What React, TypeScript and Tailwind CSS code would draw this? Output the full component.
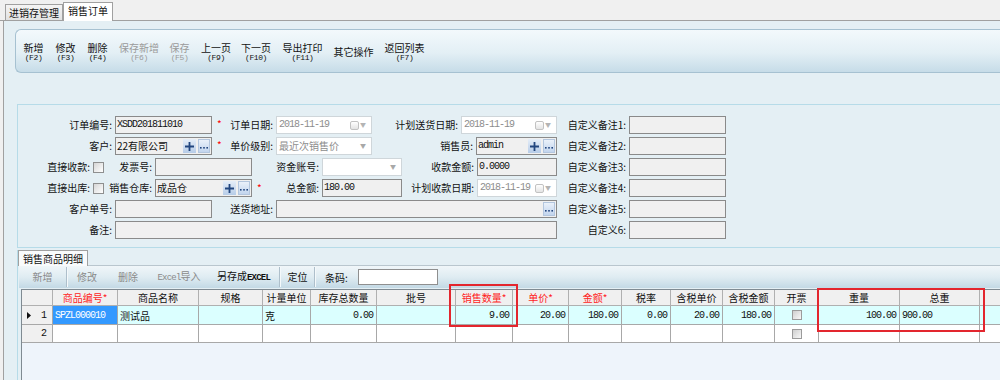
import type { ReactNode } from "react";

const mono = "font-['Liberation_Mono',monospace] tracking-[-1px] text-[10px]";

type Kids = { className?: string; children?: ReactNode };

function Label({ className = "", children }: Kids) {
  return (
    <div className={`shrink-0 whitespace-nowrap pr-[3px] text-right text-[10px] leading-[18px] text-[#111] ${className}`}>
      {children}
    </div>
  );
}

function Input({ className = "", children }: Kids) {
  return (
    <div className={`flex h-[18px] shrink-0 items-center overflow-hidden border border-[#8a8a8a] bg-[#f0f0f0] pl-px pr-px ${className}`}>
      {children}
    </div>
  );
}

function Star() {
  return <div className="w-[16px] shrink-0 pl-[5px] text-[10px] leading-[16px] text-[#f00]">*</div>;
}

function Check() {
  return <span className="block h-[11px] w-[11px] shrink-0 border border-[#8e8f8f] bg-[linear-gradient(135deg,#d6d6d6,#ffffff)]" />;
}

function PlusBtn() {
  return (
    <span className="flex h-[14px] w-[13px] shrink-0 items-center justify-center bg-[linear-gradient(to_bottom,#e6eef8,#b6cce8)]">
      <svg width="9" height="9" viewBox="0 0 9 9">
        <path d="M3.6 0h1.8v9H3.6zM0 3.6h9v1.8H0z" fill="#22467f" />
      </svg>
    </span>
  );
}

function DotsBtn() {
  return (
    <span className="ml-[2px] flex h-[14px] w-[12px] shrink-0 items-end justify-center border border-[#b3c6de] bg-[linear-gradient(to_bottom,#eaf1fa,#c2d5ee)] pb-[3px]">
      <svg width="8" height="2" viewBox="0 0 8 2">
        <rect x="0" y="0" width="1.6" height="1.6" fill="#22467f" />
        <rect x="3.2" y="0" width="1.6" height="1.6" fill="#22467f" />
        <rect x="6.4" y="0" width="1.6" height="1.6" fill="#22467f" />
      </svg>
    </span>
  );
}

function Value({ children, gray }: { children?: ReactNode; gray?: boolean }) {
  return <span className={`${mono} flex-1 whitespace-nowrap leading-none ${gray ? "text-[#8d8d8d]" : "text-[#111]"}`}>{children}</span>;
}

function DateBox({ className = "" }: { className?: string }) {
  return (
    <div className={`flex h-[18px] shrink-0 items-center border border-[#cfd6da] bg-white pl-[2px] pr-[5px] ${className}`}>
      <Value gray>2018-11-19</Value>
      <span className="block h-[9px] w-[9px] rounded-[2px] border border-[#c2c2c2] bg-[linear-gradient(to_bottom,#ffffff,#e4e4e4)]" />
      <span className="ml-[1px] text-[6px] leading-none text-[#b4b4b4]">▼</span>
    </div>
  );
}

function Select({ className = "", text }: { className?: string; text?: string }) {
  return (
    <div className={`flex h-[18px] shrink-0 items-center border border-[#cfd6da] bg-white pl-[2px] pr-[5px] ${className}`}>
      <span className="flex-1 whitespace-nowrap text-[10px] leading-none text-[#8d8d8d]">{text}</span>
      <span className="text-[6px] leading-none text-[#a8a8a8]">▼</span>
    </div>
  );
}

const tools = [
  { w: "w-[33px]", label: "新增", key: "(F2)" },
  { w: "w-[31px]", label: "修改", key: "(F3)" },
  { w: "w-[33px]", label: "删除", key: "(F4)" },
  { w: "w-[50px]", label: "保存新增", key: "(F6)", off: true },
  { w: "w-[31px]", label: "保存", key: "(F5)", off: true },
  { w: "w-[42px]", label: "上一页", key: "(F9)" },
  { w: "w-[38px]", label: "下一页", key: "(F10)" },
  { w: "w-[55px]", label: "导出打印", key: "(F11)" },
  { w: "w-[47px]", label: "其它操作" },
  { w: "w-[55px]", label: "返回列表", key: "(F7)" },
];

const cols =
  "grid grid-cols-[31px_65px_81px_64px_48px_66px_79px_57px_56px_53px_49px_52px_52px_44px_81px_80px_60px]";

const headers: [string, boolean][] = [
  ["", false],
  ["商品编号*", true],
  ["商品名称", false],
  ["规格", false],
  ["计量单位", false],
  ["库存总数量", false],
  ["批号", false],
  ["销售数量*", true],
  ["单价*", true],
  ["金额*", true],
  ["税率", false],
  ["含税单价", false],
  ["含税金额", false],
  ["开票", false],
  ["重量", false],
  ["总重", false],
  ["", false],
];

function Sep() {
  return <span className="h-[20px] w-[2px] shrink-0 border-l border-[#aebfcb] bg-[#f4f9fb]" />;
}

function GridTool({ w, children, off }: { w: string; children: ReactNode; off?: boolean }) {
  return (
    <div className={`${w} shrink-0 whitespace-nowrap text-center text-[10px] leading-[22px] ${off ? "text-[#8a8a8a]" : "text-[#111]"}`}>
      {children}
    </div>
  );
}

function NumCell({ v, bg }: { v?: string; bg: string }) {
  return (
    <div className={`flex h-full items-center justify-end border-r border-b border-[#a8a8a8] pr-[3px] ${bg}`}>
      <span className={`${mono} text-[#111]`}>{v}</span>
    </div>
  );
}

function TextCell({ v, bg }: { v?: string; bg: string }) {
  return (
    <div className={`flex h-full items-center border-r border-b border-[#a8a8a8] pl-[2px] text-[10px] text-[#111] ${bg}`}>{v}</div>
  );
}

function CheckCell({ bg }: { bg: string }) {
  return (
    <div className={`flex h-full items-center justify-center border-r border-b border-[#a8a8a8] ${bg}`}>
      <span className="block h-[10px] w-[10px] border border-[#9b9b9b] bg-[linear-gradient(135deg,#cfcfcf,#f8f8f8)]" />
    </div>
  );
}

export default function App() {
  const r1 = "bg-[#dbffff]";
  const r2 = "bg-white";
  return (
    <div className="relative flex h-[380px] w-[1000px] flex-col overflow-hidden bg-[#f0f0f0] font-['Noto_Sans_CJK_SC',sans-serif] text-[#111]">
      {/* window tabs */}
      <div className="flex h-[21px] shrink-0 items-end border-b border-[#a0a0a0] pl-[5px]">
        <div className="h-[16px] w-[58px] border border-b-0 border-[#a0a0a0] bg-[linear-gradient(to_bottom,#f4f4f4,#e2e2e2)] text-center text-[10px] leading-[15px]">
          进销存管理
        </div>
        <div className="relative -mb-px h-[19px] w-[50px] border border-b-0 border-[#a0a0a0] bg-white text-center text-[10px] leading-[16px]">
          销售订单
        </div>
      </div>

      <div className="ml-[3px] flex flex-1 flex-col border-l border-[#a0a0a0] bg-[#e4eff4]">
        {/* main toolbar */}
        <div className="ml-[11px] mt-[8px] flex h-[44px] shrink-0 items-center rounded-l-[6px] border border-r-0 border-[#a6c1d1] bg-[linear-gradient(to_bottom,#f3f9fc,#e3eff5_55%,#c6dce8)] pl-px">
          {tools.map((t) => (
            <div key={t.label} className={`${t.w} flex shrink-0 flex-col items-center pt-[1px] ${t.off ? "text-[#9a9a9a]" : "text-[#111]"}`}>
              <span className="whitespace-nowrap text-[10px] leading-[11px]">{t.label}</span>
              {t.key && (
                <span className="mt-[1px] font-['Liberation_Mono',monospace] text-[8px] leading-[8px] tracking-[-0.4px]">{t.key}</span>
              )}
            </div>
          ))}
        </div>

        {/* order header form */}
        <div className="ml-[13px] mt-[31px] flex shrink-0 flex-col gap-[3px] border-y border-l border-[#b6dbe8] pb-[8px] pt-[11px]">
          <div className="flex h-[18px]">
            <Label className="w-[97px]">订单编号:</Label>
            <Input className="w-[97px]"><Value>XSDD201811010</Value></Input>
            <Star />
            <Label className="w-[48px]">订单日期:</Label>
            <DateBox className="w-[96px]" />
            <Label className="w-[89px]">计划送货日期:</Label>
            <DateBox className="w-[96px]" />
            <Label className="w-[72px]">自定义备注1:</Label>
            <Input className="w-[97px]" />
          </div>

          <div className="flex h-[18px]">
            <Label className="w-[97px]">客户:</Label>
            <Input className="w-[97px]">
              <span className="flex-1 whitespace-nowrap text-[10px] leading-none">22有限公司</span>
              <PlusBtn />
              <DotsBtn />
            </Input>
            <Star />
            <Label className="w-[48px]">单价级别:</Label>
            <Select className="w-[96px]" text="最近次销售价" />
            <Label className="w-[104px]">销售员:</Label>
            <Input className="w-[81px] pr-[3px]">
              <Value>admin</Value>
              <PlusBtn />
              <DotsBtn />
            </Input>
            <Label className="w-[72px]">自定义备注2:</Label>
            <Input className="w-[97px]" />
          </div>

          <div className="flex h-[18px] items-center">
            <Label className="w-[75px]">直接收款:</Label>
            <Check />
            <Label className="w-[51px]">发票号:</Label>
            <Input className="w-[97px]" />
            <Label className="w-[70px]">资金账号:</Label>
            <Select className="w-[80px]" />
            <Label className="w-[75px]">收款金额:</Label>
            <Input className="w-[80px]"><Value>0.0000</Value></Input>
            <Label className="w-[72px]">自定义备注3:</Label>
            <Input className="w-[97px]" />
          </div>

          <div className="flex h-[18px] items-center">
            <Label className="w-[75px]">直接出库:</Label>
            <Check />
            <Label className="w-[51px]">销售仓库:</Label>
            <Input className="w-[97px]">
              <span className="flex-1 whitespace-nowrap text-[10px] leading-none">成品仓</span>
              <PlusBtn />
              <DotsBtn />
            </Input>
            <Star />
            <Label className="w-[54px]">总金额:</Label>
            <Input className="w-[80px]"><Value>180.00</Value></Input>
            <Label className="w-[75px]">计划收款日期:</Label>
            <DateBox className="w-[80px]" />
            <Label className="w-[72px]">自定义备注4:</Label>
            <Input className="w-[97px]" />
          </div>

          <div className="flex h-[18px]">
            <Label className="w-[97px]">客户单号:</Label>
            <Input className="w-[97px]" />
            <Label className="w-[64px]">送货地址:</Label>
            <Input className="w-[281px]">
              <span className="flex-1" />
              <DotsBtn />
            </Input>
            <Label className="w-[72px]">自定义备注5:</Label>
            <Input className="w-[97px]" />
          </div>

          <div className="flex h-[18px]">
            <Label className="w-[97px]">备注:</Label>
            <Input className="w-[442px]" />
            <Label className="w-[72px]">自定义6:</Label>
            <Input className="w-[97px]" />
          </div>
        </div>

        {/* detail lines */}
        <div className="ml-[13px] mt-[2px] flex flex-1 flex-col border-l border-[#b6dbe8]">
          <div className="flex h-[16px] shrink-0">
            <div className="w-[70px] border border-b-0 border-[#a0a0a0] bg-[#f9fbfc] text-center text-[10px] leading-[15px]">
              销售商品明细
            </div>
            <div className="flex-1 border-b border-[#b9c6ce]" />
          </div>

          <div className="ml-px flex h-[22px] shrink-0 items-center bg-[linear-gradient(to_bottom,#f0f6f9,#dfecf2_50%,#c3d9e5)]">
            <GridTool w="w-[47px]" off>新增</GridTool>
            <Sep />
            <GridTool w="w-[38px]" off>修改</GridTool>
            <GridTool w="w-[44px]" off>删除</GridTool>
            <GridTool w="w-[58px]" off>
              <span className="font-['Liberation_Mono',monospace] text-[9px] tracking-[-0.8px]">Excel</span>导入
            </GridTool>
            <GridTool w="w-[71px]">
              另存成<span className="font-['Liberation_Mono',monospace] text-[9px] font-bold tracking-[-0.8px]">EXCEL</span>
            </GridTool>
            <Sep />
            <GridTool w="w-[33px]">定位</GridTool>
            <Sep />
            <span className="ml-[9px] text-[10px]">条码:</span>
            <span className="ml-[10px] block h-[16px] w-[80px] border border-[#8f8f8f] bg-white" />
          </div>

          <div className="ml-[3px] mt-px flex-1 border-l border-t border-[#7f8a92] bg-[#eef4fb]">
            <div className={`${cols} h-[16px]`}>
              {headers.map(([h, red], i) => (
                <div
                  key={i}
                  className={`whitespace-nowrap border-r border-b border-[#b0b0b0] bg-[#f0f0f0] text-center text-[10px] leading-[15px] ${red ? "text-[#ff1d1d]" : "text-[#111]"}`}
                >
                  {h}
                </div>
              ))}
            </div>

            <div className={`${cols} h-[19px]`}>
              <div className="flex h-full items-center justify-between border-r border-b border-[#a8a8a8] bg-[#f0f0f0] pl-[5px] pr-[6px]">
                <svg width="4" height="7" viewBox="0 0 4 7">
                  <path d="M0 0L4 3.5L0 7z" fill="#111" />
                </svg>
                <span className={mono}>1</span>
              </div>
              <div className="flex h-full items-center border-r border-b border-[#a8a8a8] bg-[#3399ff] pl-[2px]">
                <span className={`${mono} text-white`}>SPZL000010</span>
              </div>
              <TextCell v="测试品" bg={r1} />
              <TextCell bg={r1} />
              <TextCell v="克" bg={r1} />
              <NumCell v="0.00" bg={r1} />
              <TextCell bg={r1} />
              <NumCell v="9.00" bg={r1} />
              <NumCell v="20.00" bg={r1} />
              <NumCell v="180.00" bg={r1} />
              <NumCell v="0.00" bg={r1} />
              <NumCell v="20.00" bg={r1} />
              <NumCell v="180.00" bg={r1} />
              <CheckCell bg={r1} />
              <NumCell v="100.00" bg={r1} />
              <div className={`flex h-full items-center border-r border-b border-[#a8a8a8] pl-[2px] ${r1}`}>
                <span className={mono}>900.00</span>
              </div>
              <TextCell bg={r1} />
            </div>

            <div className={`${cols} h-[18px]`}>
              <div className="flex h-full items-center justify-end border-r border-b border-[#a8a8a8] bg-[#f0f0f0] pr-[6px]">
                <span className={mono}>2</span>
              </div>
              {Array.from({ length: 12 }).map((_, i) => (
                <TextCell key={i} bg={r2} />
              ))}
              <CheckCell bg={r2} />
              <TextCell bg={r2} />
              <TextCell bg={r2} />
              <TextCell bg={r2} />
            </div>
          </div>
        </div>
      </div>

      {/* red annotation boxes */}
      <div className="absolute left-[449px] top-[284px] h-[43px] w-[69px] border-2 border-[#e3262e]" />
      <div className="absolute left-[817px] top-[288px] h-[44px] w-[168px] border-2 border-[#e3262e]" />
    </div>
  );
}
